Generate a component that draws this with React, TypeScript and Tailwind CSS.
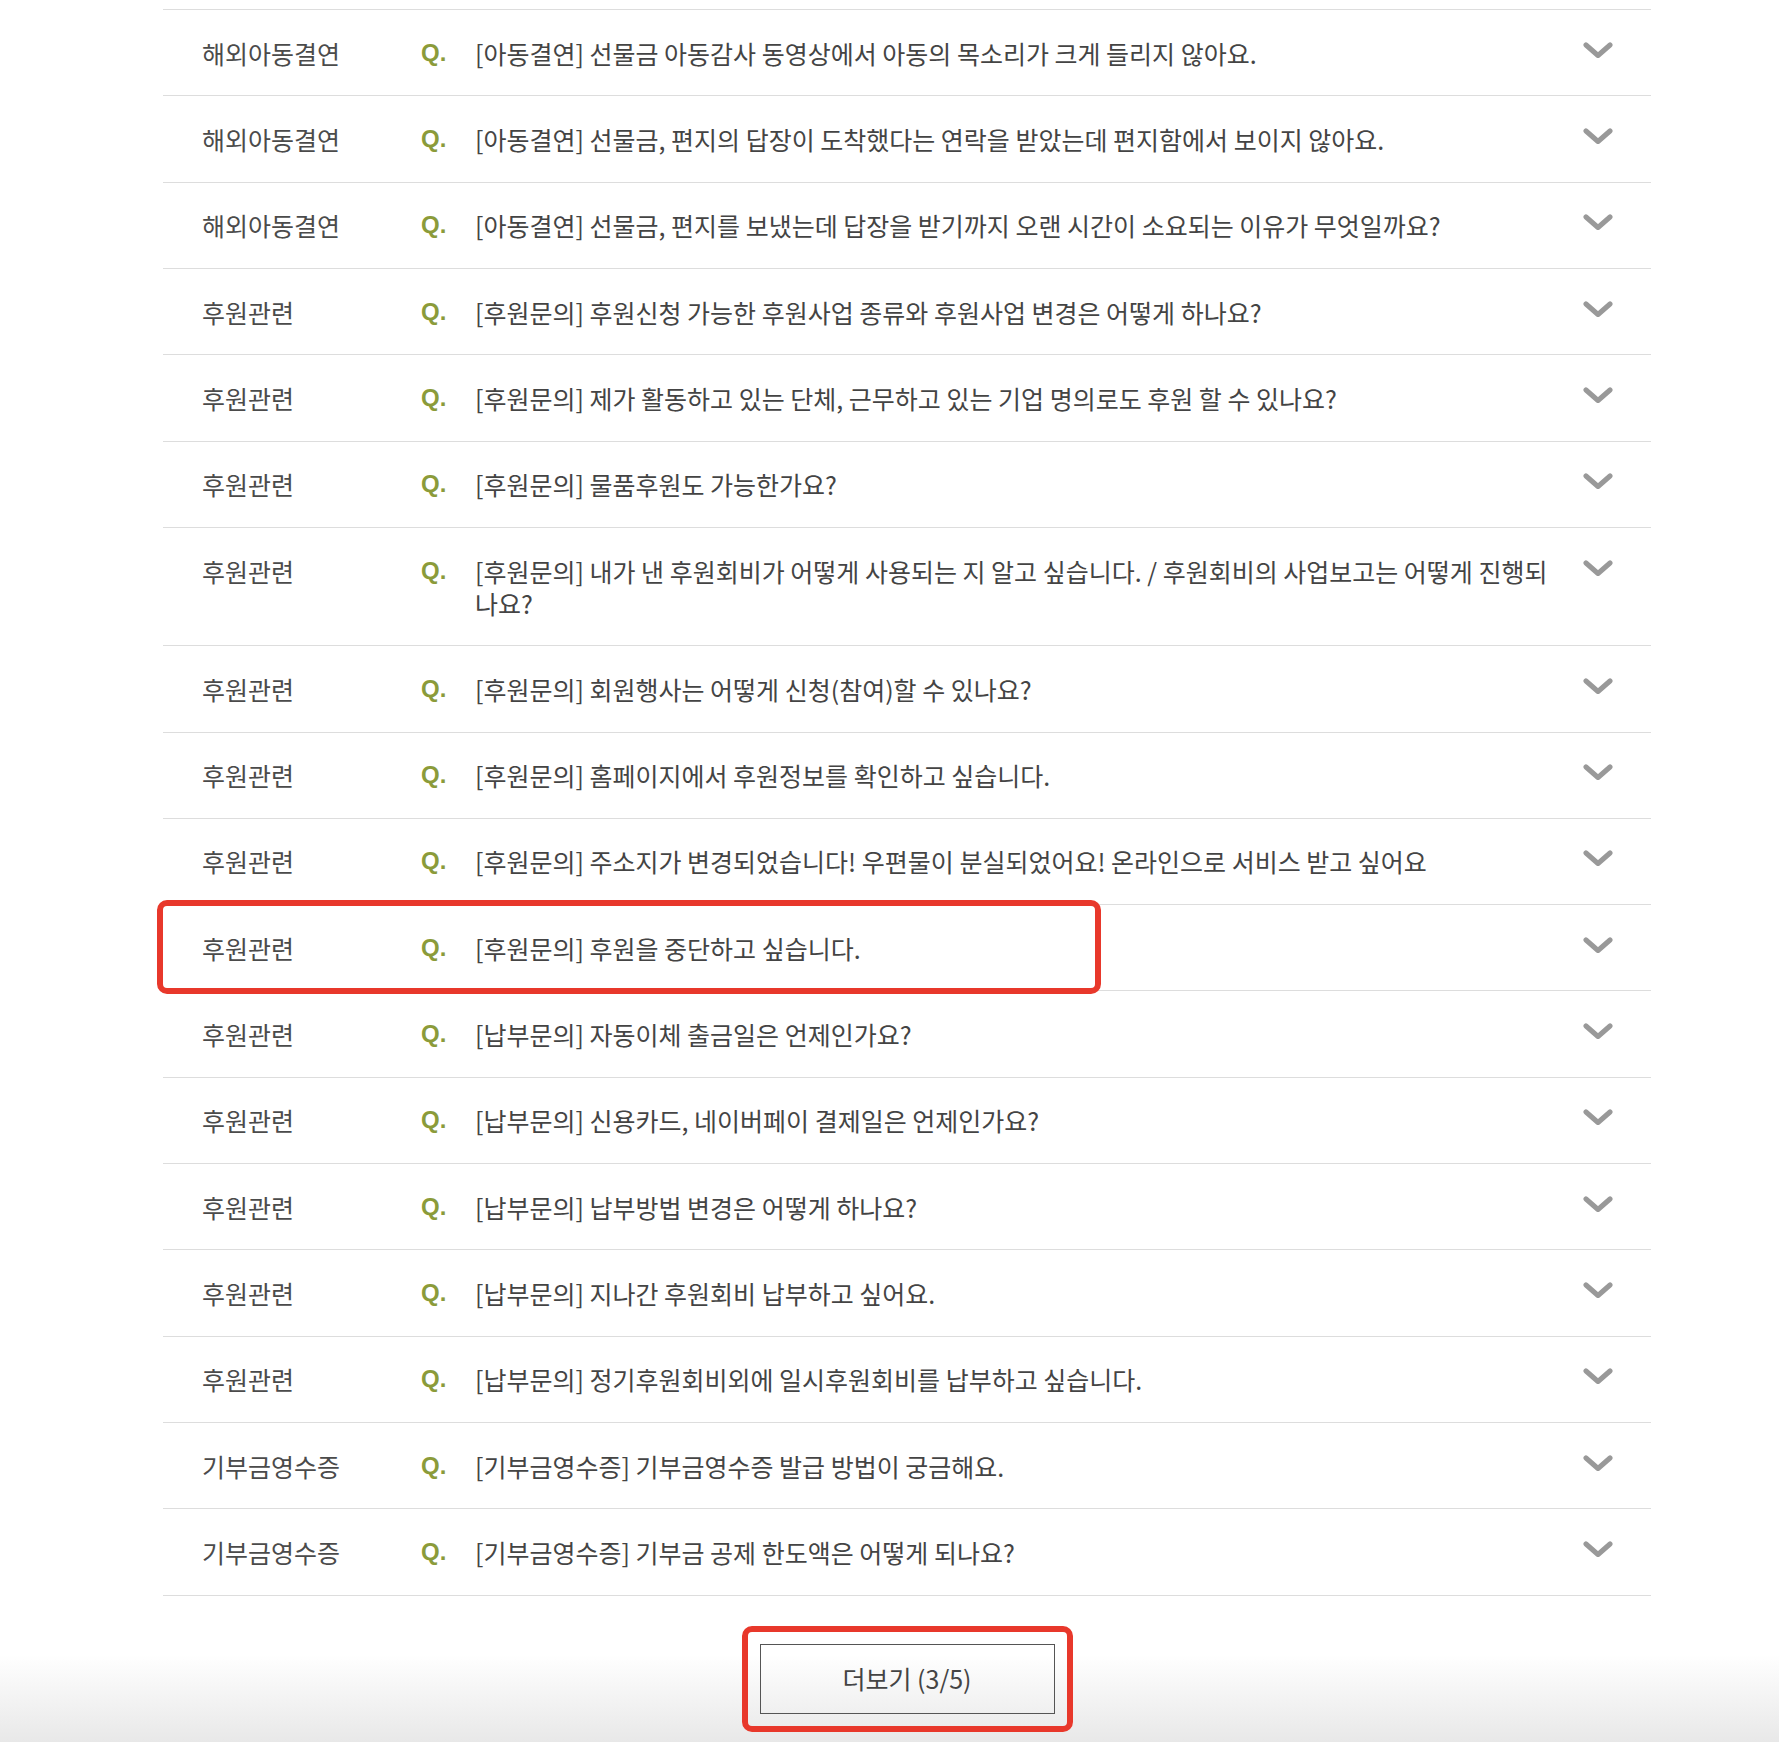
import React from 'react'

type Faq = { category: string; question: string; marked?: boolean }

const faqs: Faq[] = [
  { category: "해외아동결연", question: "[아동결연] 선물금 아동감사 동영상에서 아동의 목소리가 크게 들리지 않아요." },
  { category: "해외아동결연", question: "[아동결연] 선물금, 편지의 답장이 도착했다는 연락을 받았는데 편지함에서 보이지 않아요." },
  { category: "해외아동결연", question: "[아동결연] 선물금, 편지를 보냈는데 답장을 받기까지 오랜 시간이 소요되는 이유가 무엇일까요?" },
  { category: "후원관련", question: "[후원문의] 후원신청 가능한 후원사업 종류와 후원사업 변경은 어떻게 하나요?" },
  { category: "후원관련", question: "[후원문의] 제가 활동하고 있는 단체, 근무하고 있는 기업 명의로도 후원 할 수 있나요?" },
  { category: "후원관련", question: "[후원문의] 물품후원도 가능한가요?" },
  { category: "후원관련", question: "[후원문의] 내가 낸 후원회비가 어떻게 사용되는 지 알고 싶습니다. / 후원회비의 사업보고는 어떻게 진행되나요?" },
  { category: "후원관련", question: "[후원문의] 회원행사는 어떻게 신청(참여)할 수 있나요?" },
  { category: "후원관련", question: "[후원문의] 홈페이지에서 후원정보를 확인하고 싶습니다." },
  { category: "후원관련", question: "[후원문의] 주소지가 변경되었습니다! 우편물이 분실되었어요! 온라인으로 서비스 받고 싶어요" },
  { category: "후원관련", question: "[후원문의] 후원을 중단하고 싶습니다.", marked: true },
  { category: "후원관련", question: "[납부문의] 자동이체 출금일은 언제인가요?" },
  { category: "후원관련", question: "[납부문의] 신용카드, 네이버페이 결제일은 언제인가요?" },
  { category: "후원관련", question: "[납부문의] 납부방법 변경은 어떻게 하나요?" },
  { category: "후원관련", question: "[납부문의] 지나간 후원회비 납부하고 싶어요." },
  { category: "후원관련", question: "[납부문의] 정기후원회비외에 일시후원회비를 납부하고 싶습니다." },
  { category: "기부금영수증", question: "[기부금영수증] 기부금영수증 발급 방법이 궁금해요." },
  { category: "기부금영수증", question: "[기부금영수증] 기부금 공제 한도액은 어떻게 되나요?" },
]

const Chevron = () => (
  <svg width="30" height="17" viewBox="0 0 30 17" fill="none">
    <polyline points="3,3 15,13.5 27,3" stroke="#999" strokeWidth="5" strokeLinecap="round" strokeLinejoin="round" />
  </svg>
)

const FaqRow = ({ item }: { item: Faq }) => (
  <li className="relative flex border-b border-[#dddddd] pt-[26.66px] pb-[26.66px] text-[25px] leading-[32px]">
    <div className="w-[257px] shrink-0 pl-[39px] text-[#4b4b4b]">{item.category}</div>
    <div className="w-[55px] shrink-0 pl-px text-[24px] font-bold text-[#8b9b3a] font-['Liberation_Sans',sans-serif]">Q.</div>
    <div className="min-w-0 flex-1 pr-[4px] text-[#444444]">{item.question}</div>
    <div className="flex w-[86px] shrink-0 justify-end pr-[38px] pt-[5px]">
      <div className="h-[17px]"><Chevron /></div>
    </div>
    {item.marked && (
      <div className="pointer-events-none absolute left-[-6px] top-[-5px] h-[94px] w-[944px] rounded-[10px] border-[6px] border-[#e8382b]" />
    )}
  </li>
)

export default function App() {
  return (
    <div className="flex min-h-[1742px] w-full flex-col bg-white font-['Noto_Sans_CJK_KR','Noto_Sans',sans-serif]">
      <div className="ml-[163px] w-[1488px] pt-[9px]">
        <ul className="border-t border-[#dddddd]">
          {faqs.map((f, i) => (
            <FaqRow key={i} item={f} />
          ))}
        </ul>
      </div>
      <div className="flex flex-1 justify-center bg-[linear-gradient(to_bottom,#ffffff_40%,#e8e8e8)] pt-[30px] pl-[35px]">
        <div className="h-[106px] rounded-[10px] border-[6px] border-[#e8382b] p-[12px]">
          <button className="flex h-[70px] w-[295px] items-center justify-center border border-[#555555] text-[25px] text-[#444444]">
            더보기 (3/5)
          </button>
        </div>
      </div>
    </div>
  )
}
